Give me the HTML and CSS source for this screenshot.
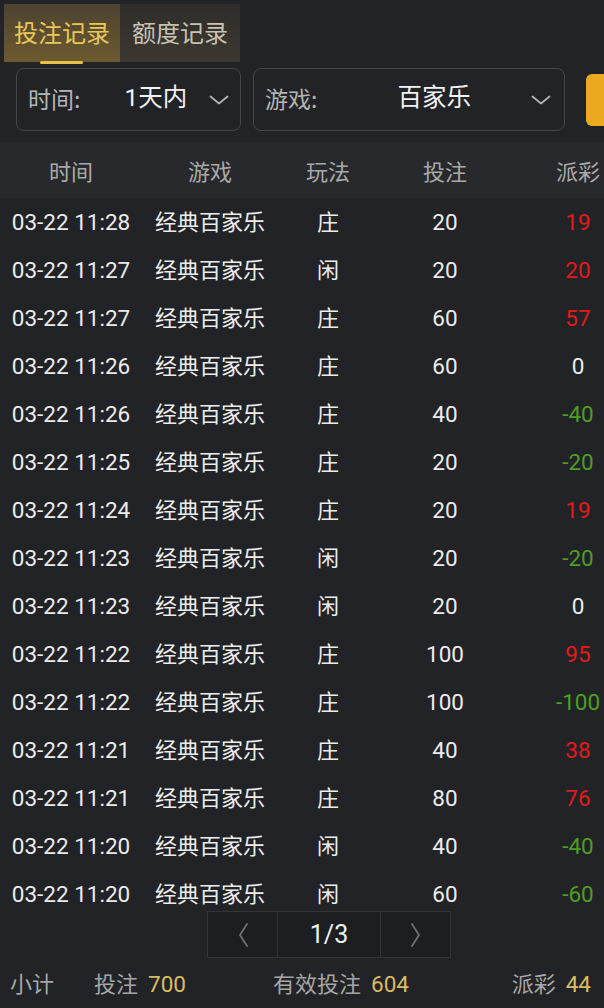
FILE: index.html
```html
<!DOCTYPE html>
<html lang="zh">
<head>
<meta charset="utf-8">
<title>投注记录</title>
<link rel="stylesheet" href="styles.css">
</head>
<body>
<div class="page">
  <div class="tabs">
    <div class="tab active">投注记录<span class="bar"></span></div>
    <div class="tab">额度记录</div>
  </div>
  <div class="filters">
    <div class="select sel-time">
      <span class="label">时间:</span>
      <span class="value">1天内</span>
      <svg class="chev" viewBox="0 0 20 10" width="20" height="10"><path d="M1.5 1.5 L10 8.5 L18.5 1.5" fill="none" stroke="#b0b0b0" stroke-width="1.9" stroke-linecap="round" stroke-linejoin="round"/></svg>
    </div>
    <div class="select sel-game">
      <span class="label">游戏:</span>
      <span class="value">百家乐</span>
      <svg class="chev" viewBox="0 0 20 10" width="20" height="10"><path d="M1.5 1.5 L10 8.5 L18.5 1.5" fill="none" stroke="#b0b0b0" stroke-width="1.9" stroke-linecap="round" stroke-linejoin="round"/></svg>
    </div>
    <div class="search-btn"></div>
  </div>
  <div class="thead">
    <div class="c c1">时间</div>
    <div class="c c2">游戏</div>
    <div class="c c3">玩法</div>
    <div class="c c4">投注</div>
    <div class="c c5">派彩</div>
  </div>
  <div class="tbody">
    <div class="row"><div class="c c1 num">03-22 11:28</div><div class="c c2">经典百家乐</div><div class="c c3">庄</div><div class="c c4 num">20</div><div class="c c5 num red">19</div></div>
    <div class="row"><div class="c c1 num">03-22 11:27</div><div class="c c2">经典百家乐</div><div class="c c3">闲</div><div class="c c4 num">20</div><div class="c c5 num red">20</div></div>
    <div class="row"><div class="c c1 num">03-22 11:27</div><div class="c c2">经典百家乐</div><div class="c c3">庄</div><div class="c c4 num">60</div><div class="c c5 num red">57</div></div>
    <div class="row"><div class="c c1 num">03-22 11:26</div><div class="c c2">经典百家乐</div><div class="c c3">庄</div><div class="c c4 num">60</div><div class="c c5 num">0</div></div>
    <div class="row"><div class="c c1 num">03-22 11:26</div><div class="c c2">经典百家乐</div><div class="c c3">庄</div><div class="c c4 num">40</div><div class="c c5 num green">-40</div></div>
    <div class="row"><div class="c c1 num">03-22 11:25</div><div class="c c2">经典百家乐</div><div class="c c3">庄</div><div class="c c4 num">20</div><div class="c c5 num green">-20</div></div>
    <div class="row"><div class="c c1 num">03-22 11:24</div><div class="c c2">经典百家乐</div><div class="c c3">庄</div><div class="c c4 num">20</div><div class="c c5 num red">19</div></div>
    <div class="row"><div class="c c1 num">03-22 11:23</div><div class="c c2">经典百家乐</div><div class="c c3">闲</div><div class="c c4 num">20</div><div class="c c5 num green">-20</div></div>
    <div class="row"><div class="c c1 num">03-22 11:23</div><div class="c c2">经典百家乐</div><div class="c c3">闲</div><div class="c c4 num">20</div><div class="c c5 num">0</div></div>
    <div class="row"><div class="c c1 num">03-22 11:22</div><div class="c c2">经典百家乐</div><div class="c c3">庄</div><div class="c c4 num">100</div><div class="c c5 num red">95</div></div>
    <div class="row"><div class="c c1 num">03-22 11:22</div><div class="c c2">经典百家乐</div><div class="c c3">庄</div><div class="c c4 num">100</div><div class="c c5 num green">-100</div></div>
    <div class="row"><div class="c c1 num">03-22 11:21</div><div class="c c2">经典百家乐</div><div class="c c3">庄</div><div class="c c4 num">40</div><div class="c c5 num red">38</div></div>
    <div class="row"><div class="c c1 num">03-22 11:21</div><div class="c c2">经典百家乐</div><div class="c c3">庄</div><div class="c c4 num">80</div><div class="c c5 num red">76</div></div>
    <div class="row"><div class="c c1 num">03-22 11:20</div><div class="c c2">经典百家乐</div><div class="c c3">闲</div><div class="c c4 num">40</div><div class="c c5 num green">-40</div></div>
    <div class="row"><div class="c c1 num">03-22 11:20</div><div class="c c2">经典百家乐</div><div class="c c3">闲</div><div class="c c4 num">60</div><div class="c c5 num green">-60</div></div>
  </div>
  <div class="pager">
    <div class="pg arrow"><svg viewBox="0 0 12 26" width="12" height="26"><path d="M10 2 L3 13 L10 24" fill="none" stroke="#6f7074" stroke-width="1.8" stroke-linecap="round" stroke-linejoin="round"/></svg></div>
    <div class="pg page-no">1/3</div>
    <div class="pg arrow"><svg viewBox="0 0 12 26" width="12" height="26"><path d="M2 2 L9 13 L2 24" fill="none" stroke="#6f7074" stroke-width="1.8" stroke-linecap="round" stroke-linejoin="round"/></svg></div>
  </div>
  <div class="footer">
    <span class="f-sub">小计</span>
    <span class="f-bet">投注<b>700</b></span>
    <span class="f-valid">有效投注<b>604</b></span>
    <span class="f-pay">派彩<b>44</b></span>
  </div>
</div>
</body>
</html>
```
FILE: styles.css
```css
html, body {
  margin: 0;
  padding: 0;
  background: #222327;
}
body {
  font-family: Roboto, "Noto Sans CJK SC", sans-serif;
  color: #e6e6e6;
  overflow: hidden;
}
.page {
  width: 604px;
  height: 1008px;
  overflow: hidden;
  position: relative;
}
.tabs {
  display: flex;
  padding: 4px 0 0 4px;
  height: 58px;
}
.tab {
  position: relative;
  width: 116px;
  height: 58px;
  box-sizing: border-box;
  padding-bottom: 2px;
  display: flex;
  align-items: center;
  justify-content: center;
  font-size: 24px;
  line-height: 1;
  color: #c9c2b3;
  background: linear-gradient(180deg, #2f2d2b 0%, #3d3830 100%);
  font-family: "Noto Sans CJK SC", sans-serif;
}
.tab + .tab { width: 120px; }
.tab.active {
  color: #e9c75a;
  background: linear-gradient(180deg, #4c4230 0%, #6d5a30 100%);
}
.tab .bar {
  position: absolute;
  left: 36px;
  bottom: -2px;
  width: 43px;
  height: 3px;
  border-radius: 2px;
  background: #e8c248;
}
.filters {
  display: flex;
  align-items: flex-start;
  padding: 6px 0 0 16px;
  height: 66px;
}
.select {
  flex: none;
  height: 61px;
  box-sizing: content-box;
  border: 1px solid #45464b;
  border-radius: 8px;
  display: flex;
  align-items: center;
  position: relative;
}
.sel-time { width: 223px; }
.sel-game { width: 310px; margin-left: 12px; }
.select .label {
  font-size: 23px;
  line-height: 1;
  color: #b4b4b4;
  font-family: "Noto Sans CJK SC", sans-serif;
  margin-left: 11px;
  padding-bottom: 2px;
}
.select .value {
  font-size: 24.5px;
  line-height: 1;
  color: #f2f2f2;
  font-family: Roboto, "Noto Sans CJK SC", sans-serif;
  padding-bottom: 2px;
}
.sel-time .value { margin-left: 44px; }
.sel-game .value { margin-left: 80px; }
.select .chev {
  position: absolute;
  top: 26px;
}
.sel-time .chev { left: 192px; }
.sel-game .chev { left: 277px; }
.search-btn {
  width: 40px;
  height: 52px;
  margin: 6px 0 0 21px;
  border-radius: 6px;
  background: #eba91f;
  flex: none;
}
.thead {
  margin-top: 8px;
  height: 56px;
  background: #28292d;
  display: grid;
  grid-template-columns: 142px 136px 100px 134px 132px;
  align-items: center;
  font-size: 22px;
  color: #a9a9a9;
  width: 644px;
  font-family: "Noto Sans CJK SC", sans-serif;
}
.c {
  text-align: center;
  white-space: nowrap;
  line-height: 26px;
}
.tbody {
  height: 712px;
  overflow: hidden;
  width: 644px;
}
.row {
  height: 48px;
  box-sizing: border-box;
  padding-top: 9px;
  display: grid;
  grid-template-columns: 142px 136px 100px 134px 132px;
  align-items: baseline;
  color: #ececec;
}
.row .c2, .row .c3 {
  font-family: "Noto Sans CJK SC", sans-serif;
  font-size: 22px;
}
.row .num {
  font-size: 22.5px;
  font-family: Roboto, sans-serif;
}
.red { color: #e21a1a; }
.green { color: #4e9e22; }
.pager {
  display: flex;
  margin-left: 207px;
  margin-top: 1px;
  height: 47px;
}
.pg {
  height: 45px;
  border: 1px solid #333438;
  background: #1d1e21;
  display: flex;
  align-items: center;
  justify-content: center;
}
.arrow { width: 69px; }
.page-no {
  width: 102px;
  border-left: none;
  border-right: none;
  font-size: 25px;
  color: #f0f0f0;
}
.footer {
  height: 50px;
  box-sizing: border-box;
  padding-top: 4px;
  display: flex;
  align-items: baseline;
  font-size: 22px;
  line-height: 40px;
  color: #a6a6a6;
  font-family: "Noto Sans CJK SC", sans-serif;
}
.footer b {
  font-weight: normal;
  color: #d7bd62;
  font-size: 22.5px;
  font-family: Roboto, sans-serif;
  margin-left: 10px;
}
.f-sub { margin-left: 10px; }
.f-bet { margin-left: 40px; }
.f-valid { margin-left: 87px; }
.f-pay { margin-left: auto; margin-right: 13px; }
```
